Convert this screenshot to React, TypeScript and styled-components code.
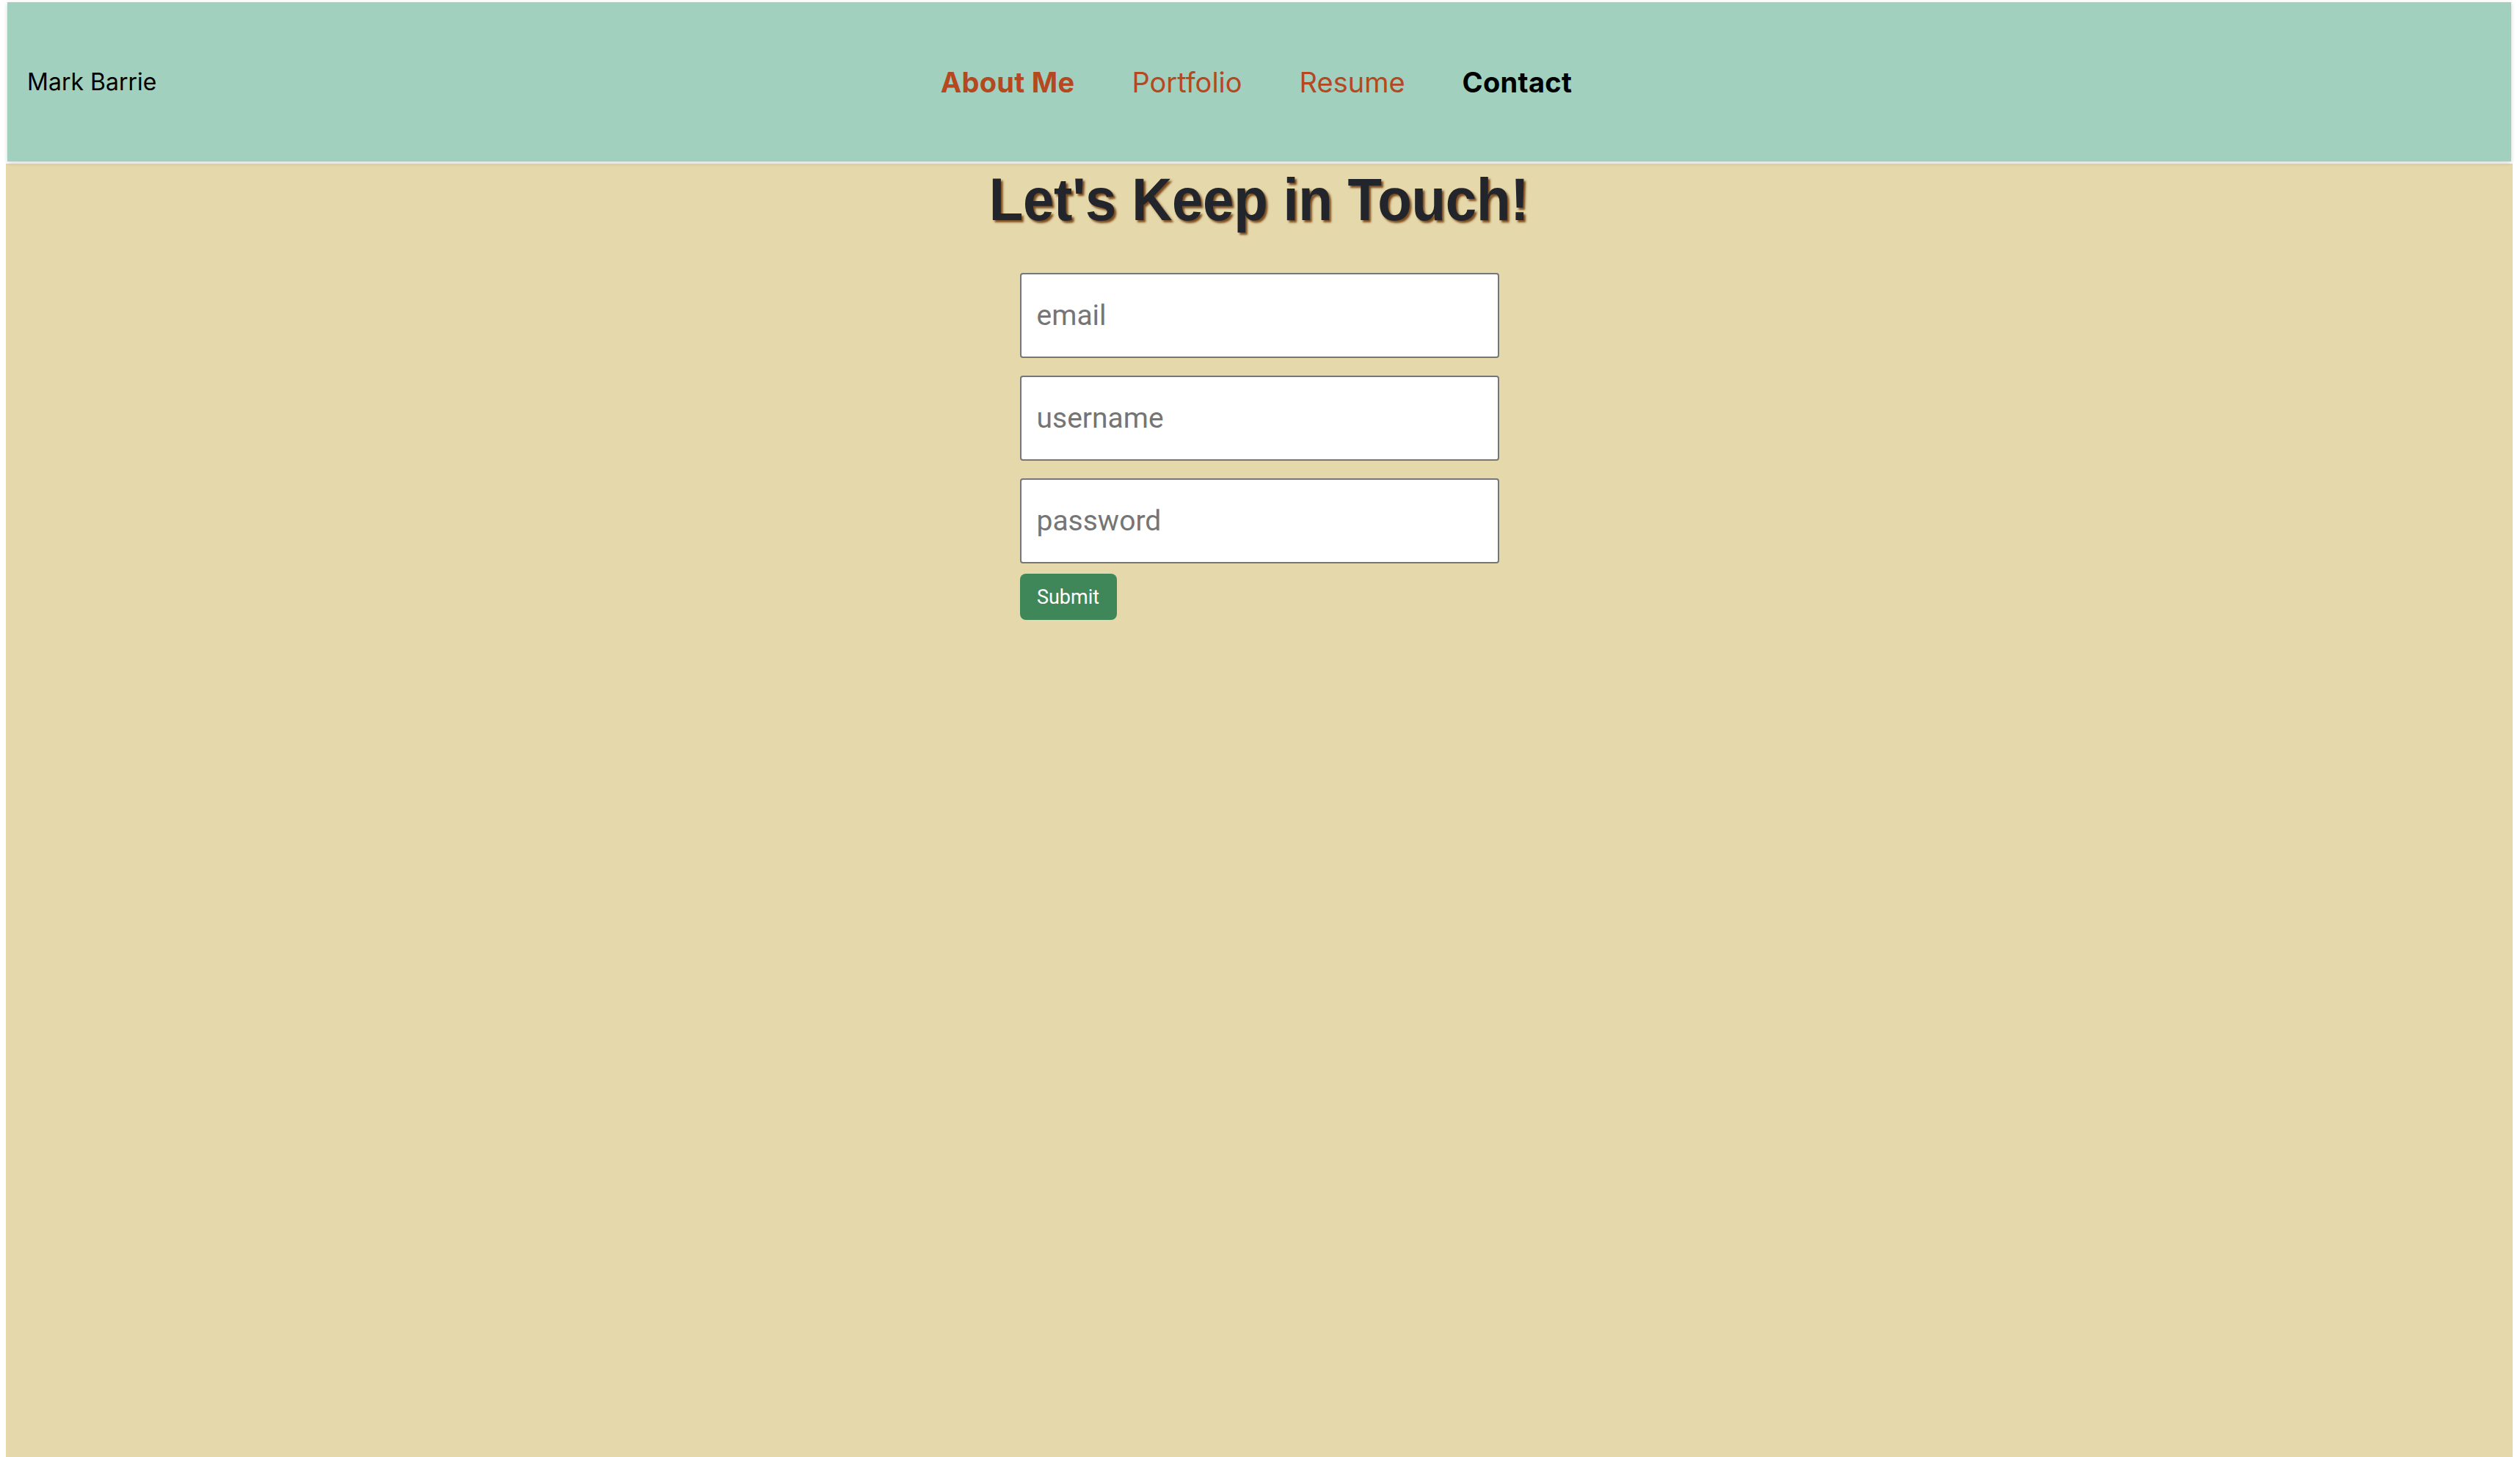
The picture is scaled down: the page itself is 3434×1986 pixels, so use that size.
import React from "react";
import styled, { createGlobalStyle } from "styled-components";

const GlobalStyle = createGlobalStyle`
  html, body {
    margin: 0;
    padding: 0;
    background: #ffffff;
  }
  * { box-sizing: border-box; }
`;

const Page = styled.div`
  min-height: 100vh;
  padding: 3px 10px 0 8px;
  display: flex;
  flex-direction: column;
`;

const Header = styled.header`
  position: relative;
  z-index: 1;
  margin: 0 2px;
  height: 217px;
  background: #a1d0bf;
  box-shadow: 0 2px 6px rgba(0, 0, 0, 0.16);
  display: grid;
  grid-template-columns: 1fr auto 1fr;
  align-items: center;
  padding: 0 27px;
`;

const Brand = styled.div`
  font-family: Inter, "Liberation Sans", sans-serif;
  font-size: 32px;
  color: #000;
`;

const Nav = styled.nav`
  display: flex;
  gap: 78px;
  align-items: center;
  margin-right: 8px;
`;

const NavLink = styled.a<{ $bold?: boolean; $dark?: boolean }>`
  font-family: Inter, "Liberation Sans", sans-serif;
  font-size: 38px;
  font-weight: ${(p) => (p.$bold ? 700 : 400)};
  letter-spacing: ${(p) => (p.$bold ? "0.3px" : "0")};
  color: ${(p) => (p.$dark ? "#000000" : "#b5481f")};
  text-decoration: none;
  cursor: pointer;
`;

const Main = styled.main`
  flex: 1;
  margin-top: 3px;
  background: #e5d8aa;
  display: flex;
  flex-direction: column;
  align-items: center;
`;

const Title = styled.h1`
  margin: 2px 0 0;
  font-family: "Liberation Sans", Arial, sans-serif;
  font-weight: 700;
  font-size: 82px;
  line-height: 94px;
  letter-spacing: -0.3px;
  color: #22252b;
  text-shadow: 3px 3px 3px #7a4a1c;
  transform: scaleX(0.93);
`;

const Form = styled.form`
  margin-top: 53px;
  display: flex;
  flex-direction: column;
  align-items: flex-start;
  gap: 24px;
`;

const Input = styled.input`
  width: 653px;
  height: 116px;
  border: 2px solid #767676;
  border-radius: 4px;
  background: #ffffff;
  padding: 0 21px;
  font-family: Roboto, "Liberation Sans", sans-serif;
  font-size: 39px;
  color: #222;
  outline: none;
  &::placeholder {
    color: #757575;
  }
`;

const SubmitButton = styled.button`
  margin-top: -10px;
  width: 132px;
  height: 63px;
  border: none;
  border-radius: 8px;
  background: #3f8758;
  color: #ffffff;
  font-family: Roboto, "Liberation Sans", sans-serif;
  font-size: 27px;
  cursor: pointer;
`;

export default function App() {
  return (
    <>
      <GlobalStyle />
      <Page>
        <Header>
          <Brand>Mark Barrie</Brand>
          <Nav>
            <NavLink $bold>About Me</NavLink>
            <NavLink>Portfolio</NavLink>
            <NavLink>Resume</NavLink>
            <NavLink $bold $dark>Contact</NavLink>
          </Nav>
          <div />
        </Header>
        <Main>
          <Title>Let's Keep in Touch!</Title>
          <Form onSubmit={(e) => e.preventDefault()}>
            <Input type="email" placeholder="email" />
            <Input type="text" placeholder="username" />
            <Input type="password" placeholder="password" />
            <SubmitButton type="submit">Submit</SubmitButton>
          </Form>
        </Main>
      </Page>
    </>
  );
}
